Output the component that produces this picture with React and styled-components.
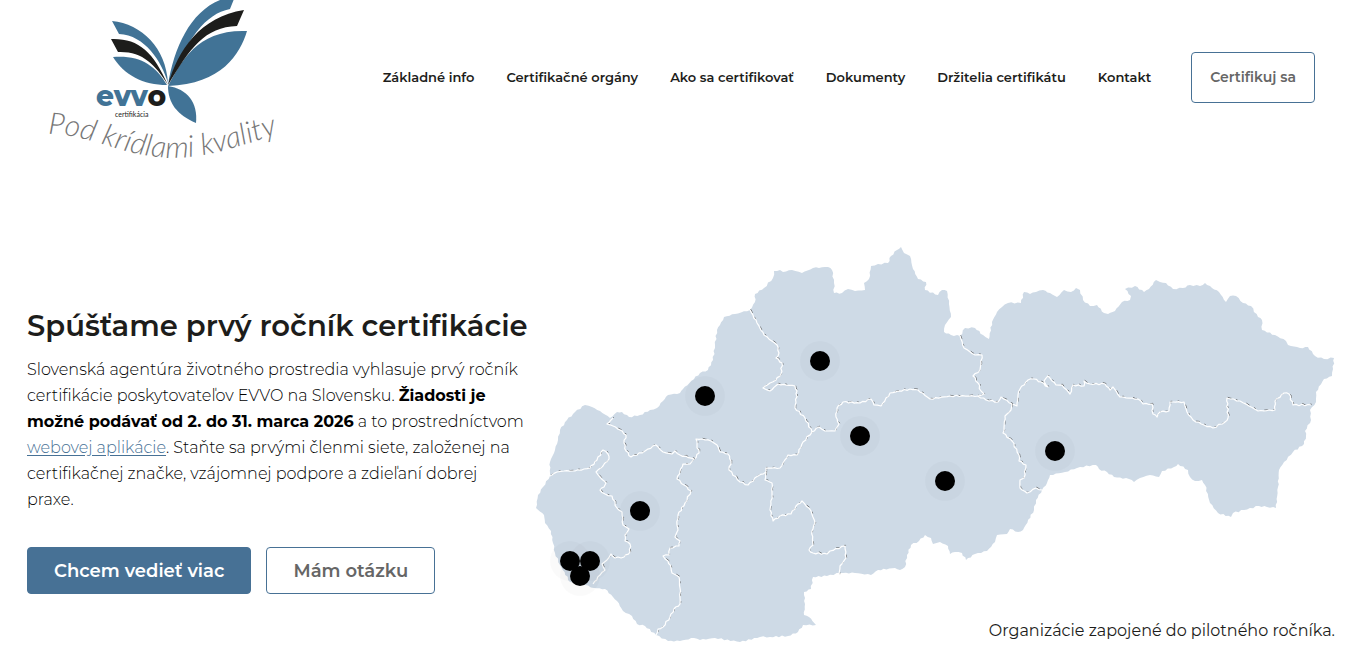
import React from "react";
import styled, { createGlobalStyle } from "styled-components";

const GlobalStyle = createGlobalStyle`
  * { box-sizing: border-box; }
  body {
    margin: 0;
    background: #fff;
    color: #000;
    font-family: Montserrat, Inter, "Open Sans", sans-serif;
    font-size: 16px;
    line-height: 26px;
    overflow-x: hidden;
  }
`;

const Header = styled.header`
  display: flex;
  align-items: flex-start;
  justify-content: space-between;
  padding: 0 34px 0 40px;
`;

const LogoLink = styled.a`
  display: block;
  flex: none;
  line-height: 0;
`;

const Nav = styled.nav`
  display: flex;
  align-items: center;
  gap: 32px;
  padding-top: 52px;
`;

const NavLink = styled.a`
  padding-bottom: 2px;
  color: #1d1d1b;
  font-size: 13px;
  font-weight: 600;
  line-height: 20px;
  text-decoration: none;
  white-space: nowrap;
`;

const Button = styled.button`
  height: ${(p) => (p.$compact ? 51 : 47)}px;
  padding: 0 ${(p) => (p.$compact ? 18 : 26)}px ${(p) => (p.$compact ? 2 : 0)}px;
  margin-left: ${(p) => (p.$compact ? 8 : 0)}px;
  border: 1px solid #477195;
  border-radius: 4px;
  background: ${(p) => (p.$primary ? "#477195" : "#fff")};
  color: ${(p) => (p.$primary ? "#fff" : "#666")};
  font-family: inherit;
  font-size: ${(p) => (p.$compact ? 14 : 18)}px;
  font-weight: 600;
  white-space: nowrap;
`;

const Hero = styled.main`
  display: grid;
  grid-template-columns: minmax(0, 500fr) minmax(0, 802fr);
  column-gap: 8px;
  padding: 72px 12px 0 27px;
`;

const Intro = styled.section`
  padding-top: 65px;
`;

const Title = styled.h1`
  margin: 0 0 12px;
  color: #1d1d1b;
  font-size: 29px;
  font-weight: 600;
  line-height: 38px;
  white-space: nowrap;
`;

const Lead = styled.p`
  margin: 0 0 34px;
  font-weight: 300;

  b { font-weight: 700; }
`;

const TextLink = styled.a`
  color: #477195;
  text-underline-offset: 2px;
`;

const Actions = styled.div`
  display: flex;
  gap: 15px;
`;

const MapFigure = styled.figure`
  display: grid;
  margin: 0;
`;

const MapDrawing = styled.svg`
  grid-area: 1 / 1;
  width: 100%;
  height: auto;
`;

const Caption = styled.figcaption`
  grid-area: 1 / 1;
  align-self: end;
  justify-self: end;
  padding-right: 2px;
  color: #1d1d1b;
`;

const outline =
  "550,476 550,462 555,450 558,440 560,430 567,420 573,414 575,412 585,405 592,407 600,411 610,418 617,412 622,412 629,417 640,415 650,410 657,408 663,401 668,395 680,393 683,389 700,373 708,370 713,360 715,345 717,330 720,325 724,317 735,314 750,310 755,302 755,294 764,288 773,278 774,271 780,270 783,272 792,270 802,273 813,268 828,267 832,270 834,283 834,293 842,293 848,289 855,291 865,290 864,283 869,279 871,266 878,264 888,263 891,256 897,250 901,247 904,253 910,256 913,269 918,279 926,282 925,290 938,295 942,290 947,291 949,304 951,317 945,325 944,332 951,335 960,336 965,328 975,328 983,335 989,339 992,322 997,312 1002,307 1008,303 1021,303 1024,292 1030,294 1036,292 1043,290 1050,293 1057,297 1064,290 1071,292 1076,288 1080,290 1083,300 1090,306 1097,305 1104,313 1108,314 1115,311 1122,302 1130,300 1131,296 1125,289 1135,286 1144,292 1149,289 1156,280 1160,282 1166,283 1173,289 1183,288 1190,285 1200,286 1205,283 1212,288 1219,292 1226,302 1230,296 1236,296 1243,303 1251,306 1258,317 1262,320 1262,330 1275,335 1286,341 1288,345 1300,348 1308,347 1315,356 1324,359 1334,358 1333,369 1332,376 1324,379 1316,392 1316,402 1310,410 1311,420 1305,431 1306,436 1304,444 1293,452 1284,462 1279,470 1278,487 1276,508 1267,507 1259,506 1244,510 1233,513 1231,517 1218,513 1210,503 1205,485 1202,480 1195,481 1190,477 1188,470 1178,464 1174,467 1162,471 1159,477 1150,475 1140,478 1134,482 1129,479 1114,477 1107,472 1099,469 1096,465 1080,467 1065,472 1050,475 1047,483 1042,490 1036,500 1034,510 1023,530 1018,532 1010,529 1007,534 997,535 995,542 987,551 975,554 966,560 962,553 955,552 950,554 948,546 940,542 933,544 931,538 925,535 919,541 911,545 907,555 905,567 900,570 895,568 878,570 871,575 855,573 840,573 827,576 813,577 811,589 804,592 805,604 804,615 809,617 816,625 803,625 798,632 788,636 770,637 760,637 740,642 715,638 700,640 694,638 680,641 668,641 656,635 645,626 637,624 632,616 623,611 617,601 605,589 594,588 585,585 570,582 560,565 555,553 553,543 551,531 545,523 544,515 536,508 538,495 543,487 550,476";

const borders = [
  "550,476 557,472 564,471 575,471 590,468 597,460 603,450 608,454 609,459 603,466 596,472 600,477 606,483 604,487 600,490 605,494 612,496 617,508 622,512 623,525 629,529 625,535 625,541 630,544 630,552 624,557 615,558 611,554 607,560 602,564 605,570 600,575 593,584",
  "613,418 607,424 613,426 620,430 626,435 624,443 626,451 631,457 645,451 656,445 663,452 672,454 675,451 680,455 694,459 699,453 697,445 696,439 702,439 711,441 717,445 720,452 728,454 731,461 729,470 740,482 748,485 758,476 766,472 766,468 780,468 788,455 797,455 803,442 812,432",
  "694,459 690,464 683,464 680,471 677,479 684,485 691,491 685,503 678,515 677,525 678,530 675,537 680,541 679,546 670,548 669,555 663,556 668,561 671,568 672,573 679,577 680,588 680,604 674,609 670,617 663,627 658,629 656,635",
  "750,310 757,323 764,335 777,345 779,353 776,358 782,363 781,374 776,380 770,383 763,388 770,391 778,384 795,386 797,391 795,408 805,418 812,432 819,427 825,431 835,431 839,424 836,417 837,408 843,402 860,403 871,399 874,405 881,406 890,393 910,389 918,390 930,399 950,396 978,396 986,400 998,402 1001,397 1012,404 1017,406 1018,395 1020,389 1028,380 1034,379 1041,382 1048,387 1044,381 1048,376 1056,385 1062,385 1070,394 1073,385 1084,386 1084,381 1090,384 1105,384 1110,390 1113,387 1120,397 1138,399 1143,404 1152,404 1153,414 1157,417 1160,412 1169,411 1170,402 1184,402 1187,412 1193,420 1204,425 1213,428 1225,422 1228,418 1227,398 1240,401 1249,406 1258,411 1275,410 1275,401 1284,393 1289,394 1293,405 1311,405",
  "960,336 964,348 975,355 982,355 980,370 973,376 978,383 981,391 984,394 978,396",
  "1012,404 1011,410 1005,416 1004,428 1003,433 1012,441 1019,455 1019,461 1026,465 1024,478 1020,480 1020,488 1027,493 1036,488 1042,490",
  "766,472 765,480 772,483 772,495 770,510 773,521 780,516 791,514 796,506 802,501 811,511 815,523 812,531 813,545 809,550 813,553 827,554 830,551 845,546 846,558 840,566 839,575",
];

const pins = [
  [705, 396], [820, 361], [860, 436], [945, 481], [1055, 451],
  [640, 511], [570, 561], [590, 561], [580, 576],
];

// Breaks every straight run into short steps so that borders look surveyed.
const roughen = (points) => {
  const list = points.split(" ").map((p) => p.split(",").map(Number));
  const out = [list[0]];
  for (let i = 1; i < list.length; i++) {
    const [ax, ay] = list[i - 1];
    const [bx, by] = list[i];
    const length = Math.hypot(bx - ax, by - ay);
    const steps = Math.max(1, Math.round(length / 3));
    for (let s = 1; s < steps; s++) {
      const t = s / steps;
      const wave = Math.sin(i * 12.9 + s * 78.2) * 0.7;
      out.push([
        ax + (bx - ax) * t - ((by - ay) / length) * wave,
        ay + (by - ay) * t + ((bx - ax) / length) * wave,
      ]);
    }
    out.push([bx, by]);
  }
  return out.map(([x, y]) => `${x.toFixed(1)},${y.toFixed(1)}`).join(" ");
};

const Logo = () => (
  <svg width="250" height="170" viewBox="40 0 250 170" role="img" aria-label="EVVO certifikácia">
    <g fill="#417396">
      <path d="M168 85C174 48 190 12 220 0L221 -1H234L230 9C205 14 188 38 168 85Z" />
      <path d="M168 86C182 60 198 29 247 31C240 54 222 84 168 86Z" />
      <path d="M112 21C142 24 166 48 168 83C162 62 145 35 119 34Z" />
      <path d="M113 57C140 55 155 65 167 85C143 85 124 75 113 57Z" />
      <path d="M168 86C187 89 198 102 196 123C177 115 168 103 168 86Z" />
    </g>
    <g fill="#1d1d1b">
      <path d="M168 85C178 50 200 17 244 10L237 26C205 27 190 48 168 85Z" />
      <path d="M111 39C138 38 153 51 168 85C155 64 142 51 118 52Z" />
    </g>
    <text x="96" y="106" fontFamily="Montserrat" fontWeight="800" fontSize="28" fill="#417396">
      evv<tspan fill="#1d1d1b">o</tspan>
    </text>
    <text x="115" y="117" fontFamily="Lato" fontSize="7" fill="#1d1d1b">certifikácia</text>
    <path id="motto" d="M48 134C85 134 110 150 150 156C200 163 235 147 290 130" fill="none" />
    <text fontFamily="Lato" fontStyle="italic" fontWeight="300" fontSize="30" fill="#777">
      <textPath href="#motto">Pod krídlami kvality</textPath>
    </text>
  </svg>
);

const links = [
  "Základné info",
  "Certifikačné orgány",
  "Ako sa certifikovať",
  "Dokumenty",
  "Držitelia certifikátu",
  "Kontakt",
];

export default function App() {
  return (
    <>
      <GlobalStyle />
      <Header>
        <LogoLink href="#"><Logo /></LogoLink>
        <Nav>
          {links.map((label) => (
            <NavLink key={label} href="#">{label}</NavLink>
          ))}
          <Button $compact>Certifikuj sa</Button>
        </Nav>
      </Header>
      <Hero>
        <Intro>
          <Title>Spúšťame prvý ročník certifikácie</Title>
          <Lead>
            Slovenská agentúra životného prostredia vyhlasuje prvý ročník
            certifikácie poskytovateľov EVVO na Slovensku.{" "}
            <b>Žiadosti je možné podávať od 2. do 31. marca 2026</b> a to
            prostredníctvom <TextLink href="#">webovej aplikácie</TextLink>.
            Staňte sa prvými členmi siete, založenej na certifikačnej značke,
            vzájomnej podpore a zdieľaní dobrej praxe.
          </Lead>
          <Actions>
            <Button $primary>Chcem vedieť viac</Button>
            <Button>Mám otázku</Button>
          </Actions>
        </Intro>
        <MapFigure>
          <MapDrawing viewBox="535 242 802 402" role="img" aria-label="Mapa Slovenska">
            <polygon points={roughen(outline)} fill="#cedae6" />
            <g fill="none" strokeLinejoin="round">
              {borders.map((b) => (
                <g key={b}>
                  <polyline points={roughen(b)} stroke="#555" strokeWidth="0.8" strokeDasharray="4 5 2 9" transform="translate(0.7 -0.7)" />
                  <polyline points={roughen(b)} stroke="#fff" strokeWidth="1.2" />
                </g>
              ))}
            </g>
            {pins.map(([x, y]) => (
              <circle key={`h${x}`} cx={x} cy={y} r="20" fill="#000" fillOpacity="0.02" />
            ))}
            {pins.map(([x, y]) => (
              <circle key={x} cx={x} cy={y} r="10" />
            ))}
          </MapDrawing>
          <Caption>Organizácie zapojené do pilotného ročníka.</Caption>
        </MapFigure>
      </Hero>
    </>
  );
}
